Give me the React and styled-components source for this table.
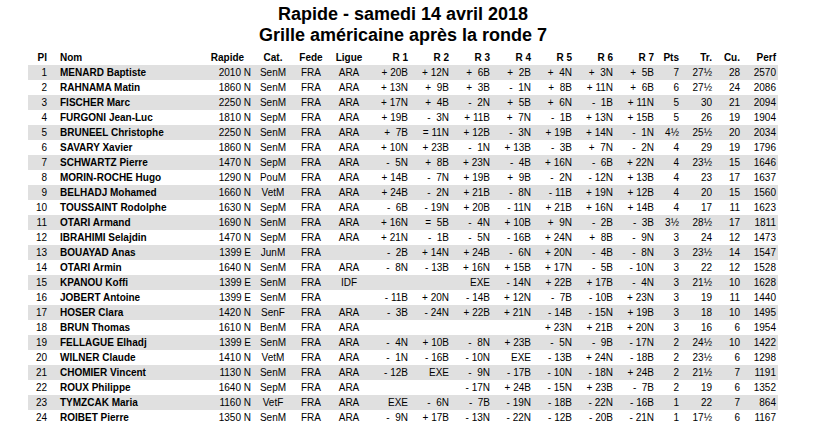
import React from "react";
import styled, { createGlobalStyle } from "styled-components";

const GlobalStyle = createGlobalStyle`
  html, body { margin: 0; padding: 0; background: #ffffff; }
  body { font-family: "Liberation Sans", Arial, sans-serif; color: #000; }
`;

const COLS =
  "24px 150px 51px 40px 36px 40px repeat(7, 41px) 25px 33px 28px 36px";

const Page = styled.div`
  width: 750px;
  padding: 4px 0 0 28px;
`;

const Title = styled.h1`
  margin: 0 0 4px;
  font-size: 18px;
  line-height: 21px;
  font-weight: 700;
  text-align: center;
`;

const Grid = styled.div`
  display: flex;
  flex-direction: column;
  font-size: 10px;
`;

const Row = styled.div`
  display: grid;
  grid-template-columns: ${COLS};
  height: 15px;
  line-height: 15px;
  background: ${(p) => (p.$shaded ? "#e0e0e0" : "transparent")};
`;

const Cell = styled.div`
  text-align: ${(p) => p.$align || "right"};
  padding: ${(p) => p.$pad || "0 2px"};
  font-weight: ${(p) => (p.$bold ? 700 : 400)};
  white-space: pre;
`;

const rows = [
  ["MENARD Baptiste", "2010 N", "SenM", "FRA", "ARA", ["+ 20B", "+ 12N", "+ 6B", "+ 2B", "+ 4N", "+ 3N", "+ 5B"], "7", "27½", "28", "2570"],
  ["RAHNAMA Matin", "1860 N", "SenM", "FRA", "ARA", ["+ 13N", "+ 9B", "+ 3B", "- 1N", "+ 8B", "+ 11N", "+ 6B"], "6", "27½", "24", "2086"],
  ["FISCHER Marc", "2250 N", "SenM", "FRA", "ARA", ["+ 17N", "+ 4B", "- 2N", "+ 5B", "+ 6N", "- 1B", "+ 11N"], "5", "30", "21", "2094"],
  ["FURGONI Jean-Luc", "1810 N", "SepM", "FRA", "ARA", ["+ 19B", "- 3N", "+ 11B", "+ 7N", "- 1B", "+ 13N", "+ 15B"], "5", "26", "19", "1904"],
  ["BRUNEEL Christophe", "2250 N", "SenM", "FRA", "ARA", ["+ 7B", "= 11N", "+ 12B", "- 3N", "+ 19B", "+ 14N", "- 1N"], "4½", "25½", "20", "2034"],
  ["SAVARY Xavier", "1860 N", "SenM", "FRA", "ARA", ["+ 10N", "+ 23B", "- 1N", "+ 13B", "- 3B", "+ 7N", "- 2N"], "4", "29", "19", "1796"],
  ["SCHWARTZ Pierre", "1470 N", "SepM", "FRA", "ARA", ["- 5N", "+ 8B", "+ 23N", "- 4B", "+ 16N", "- 6B", "+ 22N"], "4", "23½", "15", "1646"],
  ["MORIN-ROCHE Hugo", "1290 N", "PouM", "FRA", "ARA", ["+ 14B", "- 7N", "+ 19B", "+ 9B", "- 2N", "- 12N", "+ 13B"], "4", "23", "17", "1637"],
  ["BELHADJ Mohamed", "1660 N", "VetM", "FRA", "ARA", ["+ 24B", "- 2N", "+ 21B", "- 8N", "- 11B", "+ 19N", "+ 12B"], "4", "20", "15", "1560"],
  ["TOUSSAINT Rodolphe", "1630 N", "SepM", "FRA", "ARA", ["- 6B", "- 19N", "+ 20B", "- 11N", "+ 21B", "+ 16N", "+ 14B"], "4", "17", "11", "1623"],
  ["OTARI Armand", "1690 N", "SenM", "FRA", "ARA", ["+ 16N", "= 5B", "- 4N", "+ 10B", "+ 9N", "- 2B", "- 3B"], "3½", "28½", "17", "1811"],
  ["IBRAHIMI Selajdin", "1470 N", "SepM", "FRA", "ARA", ["+ 21N", "- 1B", "- 5N", "- 16B", "+ 24N", "+ 8B", "- 9N"], "3", "24", "12", "1473"],
  ["BOUAYAD Anas", "1399 E", "JunM", "FRA", "", ["- 2B", "+ 14N", "+ 24B", "- 6N", "+ 20N", "- 4B", "- 8N"], "3", "23½", "14", "1547"],
  ["OTARI Armin", "1640 N", "SenM", "FRA", "ARA", ["- 8N", "- 13B", "+ 16N", "+ 15B", "+ 17N", "- 5B", "- 10N"], "3", "22", "12", "1528"],
  ["KPANOU Koffi", "1399 E", "SenM", "FRA", "IDF", ["", "", "EXE", "- 14N", "+ 22B", "+ 17B", "- 4N"], "3", "21½", "10", "1628"],
  ["JOBERT Antoine", "1399 E", "SenM", "FRA", "", ["- 11B", "+ 20N", "- 14B", "+ 12N", "- 7B", "- 10B", "+ 23N"], "3", "19", "11", "1440"],
  ["HOSER Clara", "1420 N", "SenF", "FRA", "ARA", ["- 3B", "- 24N", "+ 22B", "+ 21N", "- 14B", "- 15N", "+ 19B"], "3", "18", "10", "1495"],
  ["BRUN Thomas", "1610 N", "BenM", "FRA", "ARA", ["", "", "", "", "+ 23N", "+ 21B", "+ 20N"], "3", "16", "6", "1954"],
  ["FELLAGUE Elhadj", "1399 E", "SenM", "FRA", "ARA", ["- 4N", "+ 10B", "- 8N", "+ 23B", "- 5N", "- 9B", "- 17N"], "2", "24½", "10", "1422"],
  ["WILNER Claude", "1410 N", "VetM", "FRA", "ARA", ["- 1N", "- 16B", "- 10N", "EXE", "- 13B", "+ 24N", "- 18B"], "2", "23½", "6", "1298"],
  ["CHOMIER Vincent", "1130 N", "SenM", "FRA", "ARA", ["- 12B", "EXE", "- 9N", "- 17B", "- 10N", "- 18N", "+ 24B"], "2", "21½", "7", "1191"],
  ["ROUX Philippe", "1640 N", "SepM", "FRA", "ARA", ["", "", "- 17N", "+ 24B", "- 15N", "+ 23B", "- 7B"], "2", "19", "6", "1352"],
  ["TYMZCAK Maria", "1160 N", "VetF", "FRA", "ARA", ["EXE", "- 6N", "- 7B", "- 19N", "- 18B", "- 22N", "- 16B"], "1", "22", "7", "864"],
  ["ROIBET Pierre", "1350 N", "SenM", "FRA", "ARA", ["- 9N", "+ 17B", "- 13N", "- 22N", "- 12B", "- 20B", "- 21N"], "1", "17½", "6", "1167"],
];

// single-digit opponents get an extra space so the sign lines up
const fmt = (r) => {
  const m = /^([+\-=]) (\d+)([BN])$/.exec(r);
  if (!m) return r;
  return `${m[1]} ${m[2].length < 2 ? " " : ""}${m[2]}${m[3]}`;
};

const headers = ["R 1", "R 2", "R 3", "R 4", "R 5", "R 6", "R 7"];

export default function App() {
  return (
    <>
      <GlobalStyle />
      <Page>
        <Title>
          Rapide - samedi 14 avril 2018
          <br />
          Grille américaine après la ronde 7
        </Title>
        <Grid>
          <Row>
            <Cell $bold $pad="0 5px 0 0">Pl</Cell>
            <Cell $bold $align="left" $pad="0 0 0 8px">Nom</Cell>
            <Cell $bold $align="center">Rapide</Cell>
            <Cell $bold $align="center">Cat.</Cell>
            <Cell $bold $align="center">Fede</Cell>
            <Cell $bold $align="center">Ligue</Cell>
            {headers.map((h) => (
              <Cell key={h} $bold>{h}</Cell>
            ))}
            <Cell $bold>Pts</Cell>
            <Cell $bold>Tr.</Cell>
            <Cell $bold>Cu.</Cell>
            <Cell $bold>Perf</Cell>
          </Row>
          {rows.map((r, i) => (
            <Row key={i} $shaded={i % 2 === 0}>
              <Cell $pad="0 5px 0 0">{i + 1}</Cell>
              <Cell $bold $align="left" $pad="0 0 0 8px">{r[0]}</Cell>
              <Cell>{r[1]}</Cell>
              <Cell $align="center">{r[2]}</Cell>
              <Cell $align="center">{r[3]}</Cell>
              <Cell $align="center">{r[4]}</Cell>
              {r[5].map((res, j) => (
                <Cell key={j}>{fmt(res)}</Cell>
              ))}
              <Cell>{r[6]}</Cell>
              <Cell>{r[7]}</Cell>
              <Cell>{r[8]}</Cell>
              <Cell>{r[9]}</Cell>
            </Row>
          ))}
        </Grid>
      </Page>
    </>
  );
}
